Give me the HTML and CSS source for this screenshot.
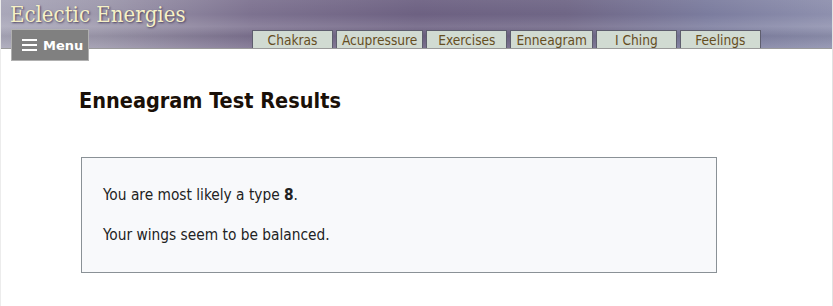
FILE: index.html
```html
<!DOCTYPE html>
<html lang="en">
<head>
    <meta charset="UTF-8">
    <meta name="viewport" content="width=device-width, initial-scale=1.0">
    <title>Enneagram Test Results</title>
    <link rel="stylesheet" href="styles.css">
</head>
<body>
    <div class="page">
        <header class="header">
            <div class="logo">Eclectic Energies</div>
            <button class="menu-btn" type="button">
                <span class="bars"><span></span><span></span><span></span></span>
                Menu
            </button>
            <nav class="tabs">
                <a href="#" class="tab">Chakras</a>
                <a href="#" class="tab">Acupressure</a>
                <a href="#" class="tab">Exercises</a>
                <a href="#" class="tab">Enneagram</a>
                <a href="#" class="tab">I Ching</a>
                <a href="#" class="tab">Feelings</a>
            </nav>
        </header>
        <main class="content">
            <h1>Enneagram Test Results</h1>
            <div class="result">
                <p>You are most likely a type <b>8</b>.</p>
                <p>Your wings seem to be balanced.</p>
            </div>
        </main>
    </div>
</body>
</html>
```

FILE: styles.css
```css
body {
    margin: 0;
    background-color: #fff;
    font-family: "DejaVu Sans Condensed", "DejaVu Sans", sans-serif;
    font-stretch: condensed;
    color: #1e1a14;
}
.page {
    position: relative;
    min-height: 306px;
    border-left: 1px solid #ececec;
    border-right: 1px solid #e2e2e2;
}
.header {
    position: relative;
    height: 48px;
    display: flex;
    align-items: flex-end;
    border-bottom: 1px solid #9a9a9a;
    background:
        linear-gradient(180deg, rgba(255,255,255,0.06) 0%, rgba(255,255,255,0) 30%, rgba(255,255,255,0.12) 55%, rgba(0,0,0,0.05) 75%, rgba(255,255,255,0.1) 100%),
        linear-gradient(90deg, #a9a7b9 0%, #9d98ac 12%, #7d7290 30%, #6d6182 50%, #6f6686 68%, #7b7c9e 85%, #8e90ae 100%);
}
.logo {
    position: absolute;
    left: 9px;
    top: 2px;
    font-family: "DejaVu Serif", "Liberation Serif", serif;
    font-stretch: condensed;
    font-size: 22px;
    color: #f6f1c6;
    text-shadow: 1px 1px 2px #4a4060;
}
.menu-btn {
    position: absolute;
    left: 10px;
    top: 29px;
    width: 78px;
    height: 32px;
    display: flex;
    align-items: center;
    gap: 6px;
    padding: 0 0 0 10px;
    background-color: #808080;
    border: 1px solid #b0b0b0;
    color: #fff;
    font-family: "DejaVu Sans", sans-serif;
    font-weight: bold;
    font-size: 13px;
    cursor: pointer;
}
.bars {
    display: flex;
    flex-direction: column;
    gap: 3px;
}
.bars span {
    display: block;
    width: 15px;
    height: 2px;
    background-color: #fff;
}
.tabs {
    display: flex;
    gap: 3px;
    margin-left: 251px;
}
.tab {
    display: block;
    min-width: 81px;
    height: 18px;
    line-height: 18px;
    padding: 0 5px;
    box-sizing: border-box;
    text-align: center;
    background-color: #d1dbd2;
    border: 1px solid #5e5e6e;
    border-bottom: none;
    color: #654d1f;
    font-size: 13.6px;
    text-decoration: none;
}
.content {
    padding: 39px 0 0 78px;
}
h1 {
    margin: 0 0 44px 0;
    font-size: 21.5px;
    font-weight: bold;
    color: #1a1008;
}
.result {
    width: 636px;
    box-sizing: border-box;
    margin-left: 2px;
    padding: 28px 21px 6px 21px;
    background-color: #f8f9fb;
    border: 1px solid #8a9196;
    font-size: 15.3px;
    color: #222;
}
.result p {
    margin: 0 0 22px 0;
}
```
